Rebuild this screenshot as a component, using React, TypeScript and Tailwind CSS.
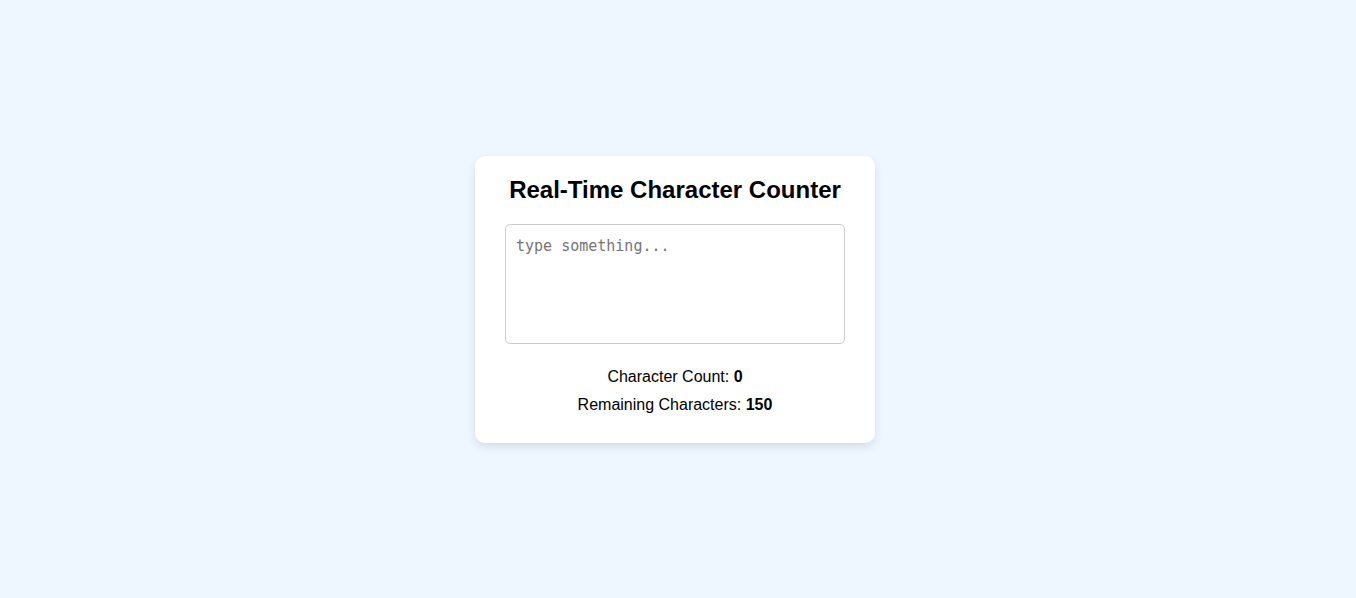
import { useState } from "react";

const MAX = 150;

export default function App() {
  const [text, setText] = useState("");

  return (
    <div className="min-h-screen bg-[#eef6ff] flex items-center justify-center pt-px pr-[6px] font-['Liberation_Sans',Arial,sans-serif] text-black">
      <div className="w-[400px] bg-white rounded-[10px] shadow-[0_4px_10px_rgba(0,0,0,0.1)] px-[30px] pt-5 pb-[29px] text-center">
        <h2 className="text-[24px] font-bold leading-[28px] mb-5">Real-Time Character Counter</h2>
        <textarea
          value={text}
          onChange={(e) => setText(e.target.value.slice(0, MAX))}
          placeholder="type something..."
          className="block w-[340px] h-[120px] p-[10px] border border-[#ccc] rounded-[5px] resize-none outline-none text-[15px] leading-[22px] font-['DejaVu_Sans_Mono',monospace] placeholder:text-[#757575]"
        />
        <div className="mt-[24px] flex flex-col gap-[10px] text-[16px] leading-[18px]">
          <p>
            Character Count: <span className="font-bold">{text.length}</span>
          </p>
          <p>
            Remaining Characters: <span className="font-bold">{MAX - text.length}</span>
          </p>
        </div>
      </div>
    </div>
  );
}
